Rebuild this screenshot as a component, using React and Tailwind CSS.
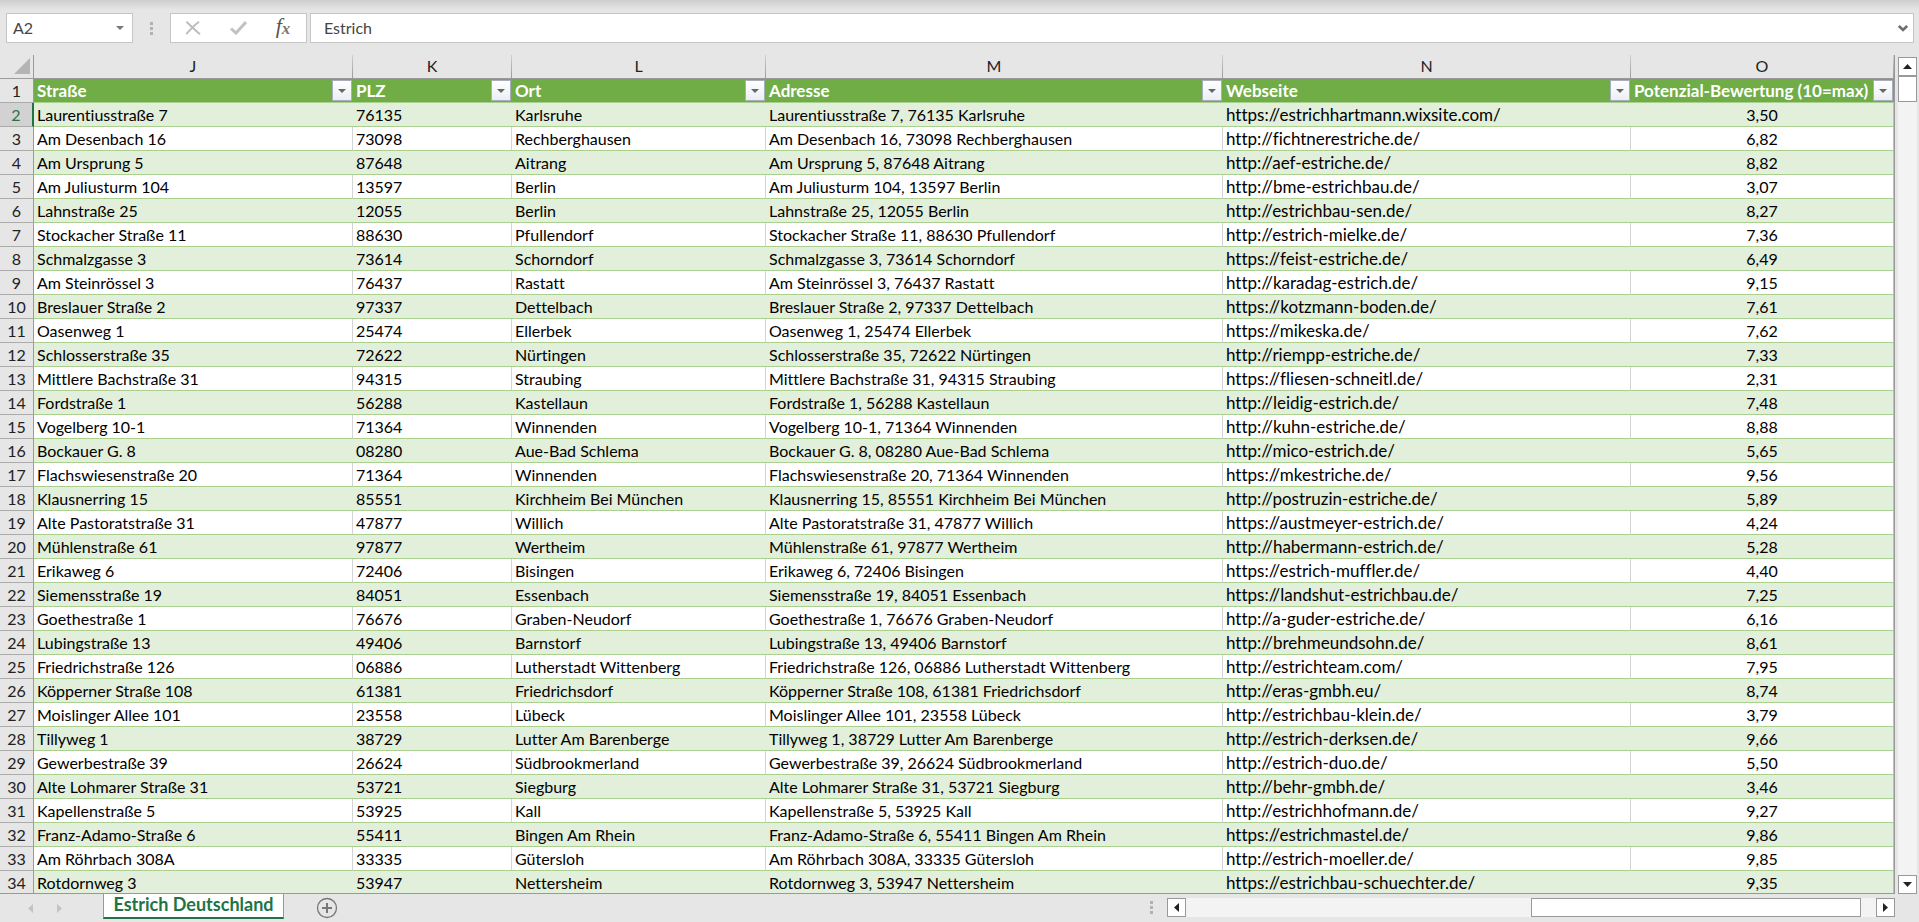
import React from "react";

const columns = [
  { letter: "J", title: "Straße", width: "w-[319px]" },
  { letter: "K", title: "PLZ", width: "w-[159px]" },
  { letter: "L", title: "Ort", width: "w-[254px]" },
  { letter: "M", title: "Adresse", width: "w-auto" },
  { letter: "N", title: "Webseite", width: "w-[408px]" },
  { letter: "O", title: "Potenzial-Bewertung (10=max)", width: "w-[263px]" },
];

const rows = [
  ["Laurentiusstraße 7", "76135", "Karlsruhe", "https://estrichhartmann.wixsite.com/", "3,50"],
  ["Am Desenbach 16", "73098", "Rechberghausen", "http://fichtnerestriche.de/", "6,82"],
  ["Am Ursprung 5", "87648", "Aitrang", "http://aef-estriche.de/", "8,82"],
  ["Am Juliusturm 104", "13597", "Berlin", "http://bme-estrichbau.de/", "3,07"],
  ["Lahnstraße 25", "12055", "Berlin", "http://estrichbau-sen.de/", "8,27"],
  ["Stockacher Straße 11", "88630", "Pfullendorf", "http://estrich-mielke.de/", "7,36"],
  ["Schmalzgasse 3", "73614", "Schorndorf", "https://feist-estriche.de/", "6,49"],
  ["Am Steinrössel 3", "76437", "Rastatt", "http://karadag-estrich.de/", "9,15"],
  ["Breslauer Straße 2", "97337", "Dettelbach", "https://kotzmann-boden.de/", "7,61"],
  ["Oasenweg 1", "25474", "Ellerbek", "https://mikeska.de/", "7,62"],
  ["Schlosserstraße 35", "72622", "Nürtingen", "http://riempp-estriche.de/", "7,33"],
  ["Mittlere Bachstraße 31", "94315", "Straubing", "https://fliesen-schneitl.de/", "2,31"],
  ["Fordstraße 1", "56288", "Kastellaun", "http://leidig-estrich.de/", "7,48"],
  ["Vogelberg 10-1", "71364", "Winnenden", "http://kuhn-estriche.de/", "8,88"],
  ["Bockauer G. 8", "08280", "Aue-Bad Schlema", "http://mico-estrich.de/", "5,65"],
  ["Flachswiesenstraße 20", "71364", "Winnenden", "https://mkestriche.de/", "9,56"],
  ["Klausnerring 15", "85551", "Kirchheim Bei München", "http://postruzin-estriche.de/", "5,89"],
  ["Alte Pastoratstraße 31", "47877", "Willich", "https://austmeyer-estrich.de/", "4,24"],
  ["Mühlenstraße 61", "97877", "Wertheim", "http://habermann-estrich.de/", "5,28"],
  ["Erikaweg 6", "72406", "Bisingen", "https://estrich-muffler.de/", "4,40"],
  ["Siemensstraße 19", "84051", "Essenbach", "https://landshut-estrichbau.de/", "7,25"],
  ["Goethestraße 1", "76676", "Graben-Neudorf", "http://a-guder-estriche.de/", "6,16"],
  ["Lubingstraße 13", "49406", "Barnstorf", "http://brehmeundsohn.de/", "8,61"],
  ["Friedrichstraße 126", "06886", "Lutherstadt Wittenberg", "http://estrichteam.com/", "7,95"],
  ["Köpperner Straße 108", "61381", "Friedrichsdorf", "http://eras-gmbh.eu/", "8,74"],
  ["Moislinger Allee 101", "23558", "Lübeck", "http://estrichbau-klein.de/", "3,79"],
  ["Tillyweg 1", "38729", "Lutter Am Barenberge", "http://estrich-derksen.de/", "9,66"],
  ["Gewerbestraße 39", "26624", "Südbrookmerland", "http://estrich-duo.de/", "5,50"],
  ["Alte Lohmarer Straße 31", "53721", "Siegburg", "http://behr-gmbh.de/", "3,46"],
  ["Kapellenstraße 5", "53925", "Kall", "http://estrichhofmann.de/", "9,27"],
  ["Franz-Adamo-Straße 6", "55411", "Bingen Am Rhein", "https://estrichmastel.de/", "9,86"],
  ["Am Röhrbach 308A", "33335", "Gütersloh", "http://estrich-moeller.de/", "9,85"],
  ["Rotdornweg 3", "53947", "Nettersheim", "https://estrichbau-schuechter.de/", "9,35"],
];

function Triangle({ direction, className }) {
  const points = {
    up: "0,5 5,0 10,5",
    down: "0,0 10,0 5,5",
    left: "5,0 0,5 5,10",
    right: "0,0 5,5 0,10",
  };
  const flat = direction === "up" || direction === "down";
  return (
    <svg
      viewBox={flat ? "0 0 10 5" : "0 0 5 10"}
      preserveAspectRatio="none"
      className={className}
      fill="currentColor"
      aria-hidden="true"
    >
      <polygon points={points[direction]} />
    </svg>
  );
}

function Grip() {
  return (
    <div className="flex flex-col gap-[2px]">
      <span className="size-[3px] bg-[#b1b1b1]" />
      <span className="size-[3px] bg-[#b1b1b1]" />
      <span className="size-[3px] bg-[#b1b1b1]" />
    </div>
  );
}

function FormulaBar() {
  return (
    <div className="flex h-[55px] shrink-0 bg-linear-to-b from-[#cdcdcd] to-[#e6e6e6] to-[10px] pt-[13px] pr-[5px] pl-[6px] text-[#444]">
      <div className="flex h-[30px] w-[127px] items-center border border-[#c6c6c6] bg-white">
        <input
          aria-label="Namenfeld"
          defaultValue="A2"
          className="h-full min-w-0 flex-1 pb-[2px] pl-[6px] text-[16px] outline-none"
        />
        <button aria-label="Namen anzeigen" className="flex h-full w-6 items-center justify-center text-[#777]">
          <Triangle direction="down" className="h-[4px] w-[8px]" />
        </button>
      </div>
      <div className="flex h-[30px] w-[37px] items-center justify-center">
        <Grip />
      </div>
      <div className="flex h-[30px] w-[137px] items-center border border-[#c6c6c6] bg-white">
        <button aria-label="Abbrechen" className="flex h-full w-[44px] items-center justify-center">
          <svg viewBox="0 0 16 14" className="h-[14px] w-[16px]" fill="none" stroke="#bdbdbd" strokeWidth="2" aria-hidden="true">
            <path d="M1.5 .8C5 4 10.500 9.500 15 13.200M14 .8C9 4.500 5 9 1.200 13.200" />
          </svg>
        </button>
        <button aria-label="Eingeben" className="flex h-full w-[46px] items-center justify-center">
          <svg viewBox="0 0 17 14" className="h-[14px] w-[17px]" fill="none" stroke="#c2c2c2" strokeWidth="3" aria-hidden="true">
            <path d="M1 7.500L6 12L16 1" />
          </svg>
        </button>
        <button
          aria-label="Funktion einfügen"
          className="flex h-full w-[44px] items-center justify-center pb-1 font-['Liberation_Serif',serif] text-[22px] leading-none text-[#555] italic"
        >
          f<span className="pt-1 text-[17px] font-bold text-[#777]">x</span>
        </button>
      </div>
      <div className="ml-[3px] flex h-[30px] min-w-0 flex-1 items-center border border-[#c6c6c6] bg-white">
        <input
          aria-label="Bearbeitungsleiste"
          defaultValue="Estrich"
          className="h-full min-w-0 flex-1 pb-[2px] pl-[13px] text-[16px] outline-none"
        />
        <button aria-label="Bearbeitungsleiste erweitern" className="flex h-full w-5 items-center justify-center">
          <svg viewBox="0 0 10 7" className="h-[7px] w-[10px]" fill="none" stroke="#6e6e6e" strokeWidth="2.600" aria-hidden="true">
            <path d="M.8 1L5 5L9.200 1" />
          </svg>
        </button>
      </div>
    </div>
  );
}

function FilterButton({ title }) {
  return (
    <button
      aria-label={`${title} filtern`}
      className="mr-px flex h-[21px] w-5 shrink-0 items-center justify-center border border-[#a9aebd] bg-linear-to-b from-white to-[#eceef4] text-[#666]"
    >
      <Triangle direction="down" className="h-[4px] w-[8px]" />
    </button>
  );
}

function RowNumber({ value, selected }) {
  return (
    <th
      scope="row"
      className={
        selected
          ? "h-6 border-r-2 border-b border-r-[#217346] border-b-[#ababab] bg-[#d2d2d2] p-0 text-center font-normal text-[#217346]"
          : "h-6 border-r border-b border-r-[#9b9b9b] border-b-[#ababab] bg-[#e6e6e6] p-0 text-center font-normal text-[#222]"
      }
    >
      {value}
    </th>
  );
}

function Sheet() {
  return (
    <div className="min-w-0 flex-1 overflow-hidden border-b border-[#999]">
      <table className="w-full table-fixed border-separate border-spacing-0 border-r border-[#999] text-[16px] leading-[22px] whitespace-nowrap text-black">
        <colgroup>
          <col className="w-[34px]" />
          {columns.map((c) => (
            <col key={c.letter} className={c.width} />
          ))}
        </colgroup>
        <thead>
          <tr>
            <th className="h-6 border-r border-b border-[#9b9b9b] bg-[#e6e6e6] p-0">
              <button aria-label="Alles auswählen" className="flex h-[23px] w-full items-end justify-end pr-[3px] pb-[4px]">
                <svg viewBox="0 0 16 16" className="size-4" fill="#b4b4b4" aria-hidden="true">
                  <path d="M16 0V16H0Z" />
                </svg>
              </button>
            </th>
            {columns.map((c) => (
              <th key={c.letter} scope="col" className="h-6 border-b border-[#999] bg-[#e6e6e6] p-0 font-normal text-[#222]">
                <div className="flex h-[23px]">
                  <span className="flex-1">{c.letter}</span>
                  <span className="w-px bg-linear-to-b from-[#d0d0d0] to-[#999]" />
                </div>
              </th>
            ))}
          </tr>
          <tr>
            <RowNumber value={1} />
            {columns.map((c) => (
              <th key={c.letter} scope="col" className="h-6 border-b border-[#a9d08e] bg-[#70ad47] p-0 text-left text-[17px] font-bold text-white">
                <div className="flex h-[23px] items-center">
                  <span className="min-w-0 flex-1 pl-[3px]">{c.title}</span>
                  <FilterButton title={c.title} />
                </div>
              </th>
            ))}
          </tr>
        </thead>
        <tbody>
          {rows.map(([street, zip, city, site, score], i) => {
            const band = i % 2 === 0;
            const cell = band
              ? "h-6 overflow-hidden border-b border-[#a9d08e] bg-[#e2efda] py-0 pr-0 pl-[3px]"
              : "h-6 overflow-hidden border-r border-b border-r-[#d4d4d4] border-b-[#a9d08e] bg-white py-0 pr-0 pl-[3px]";
            return (
              <tr key={i}>
                <RowNumber value={i + 2} selected={i === 0} />
                <td className={cell}>{street}</td>
                <td className={cell}>{zip}</td>
                <td className={cell}>{city}</td>
                <td className={cell}>{`${street}, ${zip} ${city}`}</td>
                <td className={`${cell} text-[17px]`}>{site}</td>
                <td
                  className={
                    band
                      ? "h-6 border-r border-b border-[#a9d08e] bg-[#e2efda] p-0 text-center"
                      : "h-6 border-r border-b border-[#a9d08e] bg-white p-0 text-center"
                  }
                >
                  {score}
                </td>
              </tr>
            );
          })}
        </tbody>
      </table>
    </div>
  );
}

function ScrollButton({ label, direction }) {
  const flat = direction === "up" || direction === "down";
  return (
    <button aria-label={label} className="flex size-[19px] shrink-0 items-center justify-center border border-[#999] bg-white text-[#222]">
      <Triangle direction={direction} className={flat ? "h-[5px] w-[9px]" : "h-[9px] w-[5px]"} />
    </button>
  );
}

function VerticalScroll() {
  return (
    <div className="flex w-[24px] shrink-0 flex-col bg-[#e6e6e6] pt-[2px] pl-[3px]">
      <ScrollButton label="Nach oben" direction="up" />
      <div className="w-[19px] flex-1 bg-[#f3f3f3]">
        <div className="h-[26px] border border-[#999] bg-white" />
      </div>
      <ScrollButton label="Nach unten" direction="down" />
    </div>
  );
}

function BottomBar() {
  return (
    <div className="flex h-7 shrink-0 bg-[#e6e6e6] pr-[24px]">
      <div className="flex w-[103px] shrink-0 items-center gap-[24px] pl-[28px] text-[#c3c3c3]">
        <button aria-label="Vorheriges Blatt">
          <Triangle direction="left" className="h-[9px] w-[5px]" />
        </button>
        <button aria-label="Nächstes Blatt">
          <Triangle direction="right" className="h-[9px] w-[5px]" />
        </button>
      </div>
      <button className="flex h-[25px] w-[181px] shrink-0 items-start justify-center border-x border-b-2 border-x-[#999] border-b-[#217346] bg-white text-[18px] leading-[20px] font-bold whitespace-nowrap text-[#217346]">
        Estrich Deutschland
      </button>
      <button aria-label="Neues Blatt" className="ml-[32px] flex h-[28px] items-center">
        <svg viewBox="0 0 22 22" className="size-[22px]" fill="none" stroke="#777" aria-hidden="true">
          <circle cx="11" cy="11" r="9.500" strokeWidth="1.300" />
          <path d="M11 6V16M6 11H16" strokeWidth="2" />
        </svg>
      </button>
      <div className="flex-1" />
      <div className="flex h-[27px] w-[745px] items-center">
        <div className="w-[17px] shrink-0">
          <Grip />
        </div>
        <ScrollButton label="Nach links" direction="left" />
        <div className="flex h-[19px] flex-1 justify-end bg-[#f3f3f3] pr-[15px]">
          <div className="w-[330px] border border-[#999] bg-white" />
        </div>
        <ScrollButton label="Nach rechts" direction="right" />
      </div>
    </div>
  );
}

export default function App() {
  return (
    <div className="flex h-screen flex-col overflow-hidden bg-[#e6e6e6] font-['Lato',sans-serif] [font-variant-ligatures:none]">
      <FormulaBar />
      <div className="flex min-h-0 flex-1">
        <Sheet />
        <VerticalScroll />
      </div>
      <BottomBar />
    </div>
  );
}
